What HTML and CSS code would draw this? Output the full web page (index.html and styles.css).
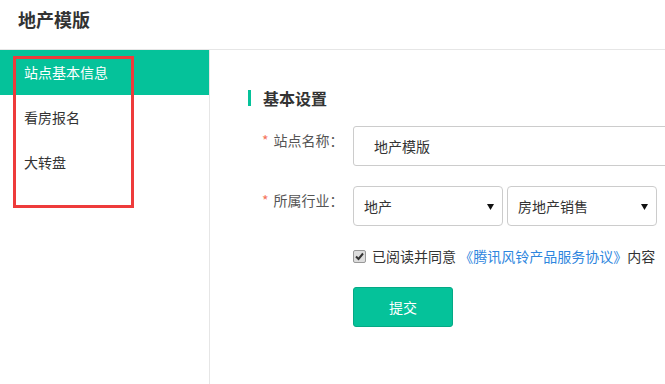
FILE: index.html
```html
<!DOCTYPE html>
<html lang="zh-CN">
<head>
<meta charset="utf-8">
<title>地产模版</title>
<link rel="stylesheet" href="styles.css">
</head>
<body>
<header class="header">
  <h1 class="title">地产模版</h1>
</header>
<div class="main">
  <nav class="sidebar">
    <a class="nav-item active">站点基本信息</a>
    <a class="nav-item">看房报名</a>
    <a class="nav-item">大转盘</a>
    <div class="highlight"></div>
  </nav>
  <section class="content">
    <h2 class="section-title"><span class="bar"></span>基本设置</h2>
    <div class="form-row">
      <label class="label"><span class="req">*</span>站点名称：</label>
      <div class="input">地产模版</div>
    </div>
    <div class="form-row">
      <label class="label"><span class="req">*</span>所属行业：</label>
      <div class="selects">
        <div class="select"><span>地产</span><svg class="arrow" width="7" height="6" viewBox="0 0 7 6"><path d="M0 0H7L3.5 6Z" fill="#111"/></svg></div>
        <div class="select"><span>房地产销售</span><svg class="arrow" width="7" height="6" viewBox="0 0 7 6"><path d="M0 0H7L3.5 6Z" fill="#111"/></svg></div>
      </div>
    </div>
    <div class="agree">
      <span class="checkbox"><svg width="9" height="9" viewBox="0 0 9 9"><path d="M1 4.5L3.5 7L8 1.5" stroke="#333" stroke-width="2" fill="none"/></svg></span>
      <span class="agree-text">已阅读并同意 <a class="link">《腾讯风铃产品服务协议》</a>内容</span>
    </div>
    <button class="submit">提交</button>
  </section>
</div>
</body>
</html>
```

FILE: styles.css
```css
* { box-sizing: border-box; }
html, body { margin: 0; padding: 0; background: #fff; }
body {
  font-family: "Noto Sans CJK SC", "Liberation Sans", sans-serif;
  color: #333;
  font-size: 14px;
  width: 665px;
  height: 384px;
  overflow: hidden;
}
.header {
  height: 50px;
  border-bottom: 1px solid #e6e6e6;
  padding-left: 18px;
}
.title {
  margin: 0;
  font-size: 18px;
  font-weight: bold;
  line-height: 38px;
  color: #333;
}
.main {
  display: flex;
  height: 334px;
}
.sidebar {
  position: relative;
  width: 210px;
  flex: none;
  border-right: 1px solid #e6e6e6;
  display: flex;
  flex-direction: column;
}
.nav-item {
  height: 45px;
  line-height: 45px;
  padding-left: 24px;
  font-size: 14px;
  color: #333;
}
.nav-item.active {
  background: #05c29a;
  color: #fff;
}
.highlight {
  position: absolute;
  left: 13px;
  top: 6px;
  width: 121px;
  height: 152px;
  border: 3px solid #ee3b3b;
}
.content {
  flex: 1;
  padding: 37px 0 0 38px;
}
.section-title {
  margin: 0 0 17px;
  display: flex;
  align-items: center;
  font-size: 16px;
  font-weight: bold;
  line-height: 22px;
  height: 22px;
  color: #333;
}
.bar {
  width: 3px;
  height: 16px;
  background: #05c29a;
  margin-right: 12px;
}
.form-row {
  display: flex;
  margin-bottom: 20px;
}
.label {
  width: 105px;
  flex: none;
  padding-left: 14px;
  line-height: 29px;
  color: #555;
  font-size: 14px;
}
.req {
  color: #f5735a;
  margin-right: 5px;
}
.input {
  width: 340px;
  height: 40px;
  flex: none;
  border: 1px solid #ccc;
  border-radius: 3px;
  padding-left: 20px;
  line-height: 38px;
  font-size: 14px;
  color: #333;
}
.selects {
  display: flex;
  gap: 4px;
}
.select {
  width: 150px;
  height: 40px;
  border: 1px solid #ccc;
  border-radius: 4px;
  padding: 0 8px 0 10px;
  display: flex;
  align-items: center;
  justify-content: space-between;
  font-size: 14px;
  color: #333;
}
.arrow { margin-top: 2px; }
.agree {
  display: flex;
  align-items: center;
  margin-left: 105px;
  height: 20px;
  margin-top: 0;
}
.checkbox {
  width: 13px;
  height: 13px;
  border: 1px solid #999;
  border-radius: 2px;
  background: #ddd;
  display: flex;
  align-items: center;
  justify-content: center;
  margin-right: 6px;
}
.agree-text {
  line-height: 20px;
  color: #333;
}
.link { color: #2e86de; }
.submit {
  display: block;
  margin: 21px 0 0 105px;
  width: 100px;
  height: 40px;
  background: #05c29a;
  border: 1px solid #04a985;
  border-radius: 3px;
  color: #fff;
  font-family: inherit;
  font-size: 14px;
  padding: 0;
}
```
